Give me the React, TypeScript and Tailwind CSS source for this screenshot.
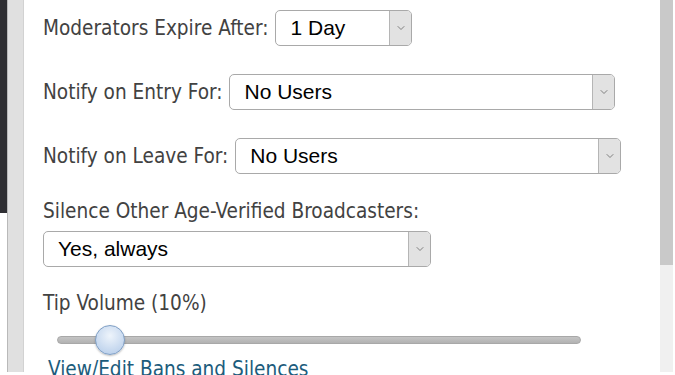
import { ChevronDown } from "lucide-react";

const labelFont = "font-['Tahoma','DejaVu_Sans_Condensed','DejaVu_Sans',sans-serif]";

function Select({ value, width }: { value: string; width: string }) {
  return (
    <div
      className={`flex h-[36px] ${width} shrink-0 items-stretch overflow-hidden rounded-[5px] border border-[#a9a9a9] bg-white`}
    >
      <span className="flex flex-1 items-center pl-[14px] font-['Liberation_Sans',Arial,sans-serif] text-[21px] text-black">
        {value}
      </span>
      <span className="flex w-[22px] items-center justify-center border-l border-[#b5b5b5] bg-[#e2e2e2]">
        <ChevronDown size={12} strokeWidth={1.6} className="text-[#666]" />
      </span>
    </div>
  );
}

export default function App() {
  return (
    <div className="flex h-[375px] w-[675px] overflow-hidden bg-white">
      {/* left rail */}
      <div className="flex w-[7px] flex-col">
        <div className="h-[213px] bg-[#2f2f33]" />
      </div>
      <div className="h-[372px] w-[17px] border-l border-r border-l-[#b9b9b9] border-r-[#d2d2d2] bg-[#e0e0e0]" />

      {/* panel */}
      <div className={`flex flex-1 flex-col pl-[19px] pt-[10px] ${labelFont} text-[20.6px] text-[#424242]`}>
        <div className="flex shrink-0 items-center gap-[7px]">
          <span className="whitespace-nowrap">Moderators Expire After:</span>
          <Select value="1 Day" width="w-[137px]" />
        </div>

        <div className="mt-[28px] flex shrink-0 items-center gap-[7px]">
          <span className="whitespace-nowrap">Notify on Entry For:</span>
          <Select value="No Users" width="w-[386px]" />
        </div>

        <div className="mt-[28px] flex shrink-0 items-center gap-[7px]">
          <span className="whitespace-nowrap">Notify on Leave For:</span>
          <Select value="No Users" width="w-[386px]" />
        </div>

        <div className="mt-[25px] shrink-0 whitespace-nowrap leading-[24px]">Silence Other Age-Verified Broadcasters:</div>
        <div className="mt-[8px] shrink-0">
          <Select value="Yes, always" width="w-[388px]" />
        </div>

        <div className="mt-[24px] shrink-0 leading-[24px]">Tip Volume (10%)</div>
        <div className="relative mt-[10px] ml-[14px] h-[30px] w-[524px] shrink-0">
          <div className="absolute left-0 right-0 top-[11px] h-[8px] rounded-full border border-[#a8a8a8] bg-[linear-gradient(#c4c4c4,#b2b2b2)]" />
          <div className="absolute left-[38px] top-0 h-[30px] w-[30px] rounded-full border border-[#7f9fc5] bg-[radial-gradient(circle_at_50%_35%,#eef4fb,#c3d6ee_70%,#a9c2e3)] shadow-[0_1px_2px_rgba(0,0,0,0.25)]" />
        </div>

        <a className="mt-[2px] shrink-0 whitespace-nowrap pl-[5px] leading-[24px] text-[#1c5c7c]">View/Edit Bans and Silences</a>
      </div>

      {/* scrollbar */}
      <div className="mr-[2px] flex h-[372px] w-[13px] flex-col">
        <div className="h-[265px] bg-[#c9c9c9]" />
        <div className="flex-1 bg-[#f0f0f0]" />
      </div>
    </div>
  );
}
